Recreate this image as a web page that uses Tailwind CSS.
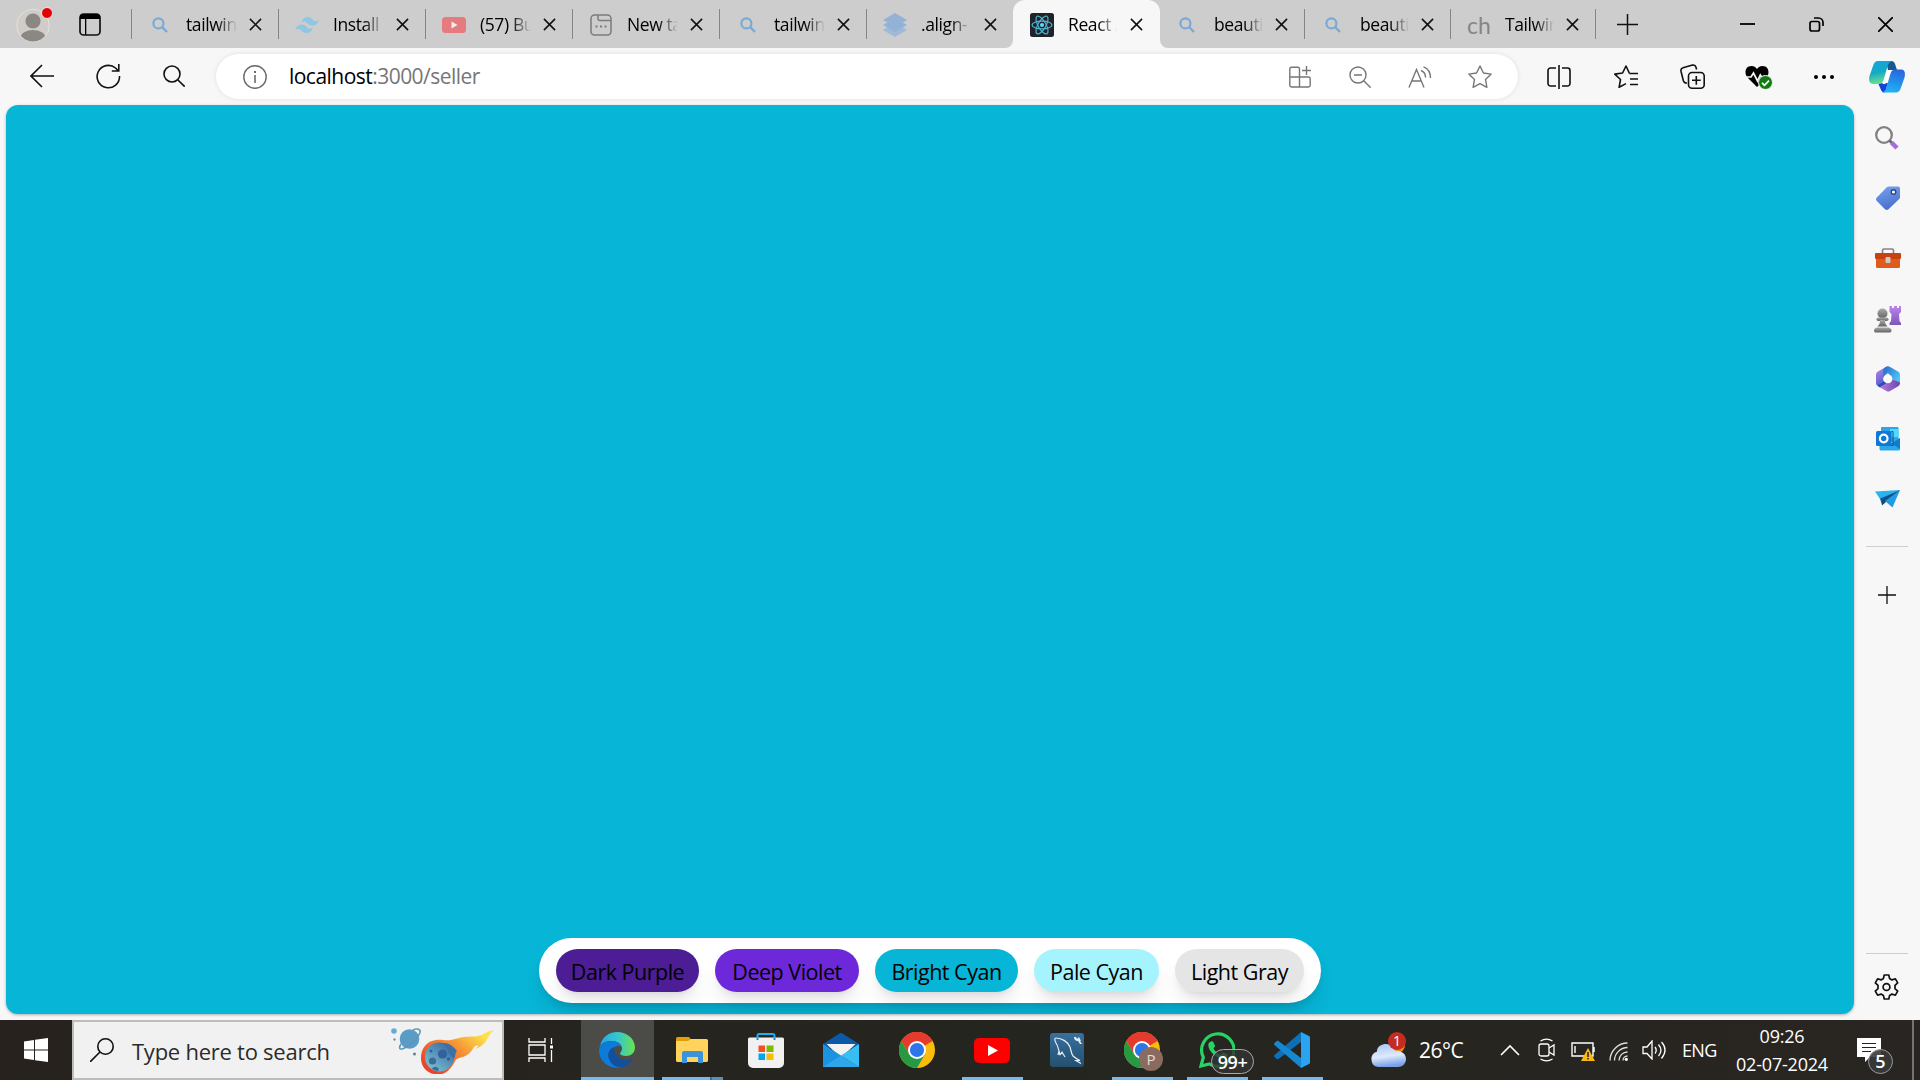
<!DOCTYPE html>
<html lang="en">
<head>
<meta charset="utf-8">
<title>React App</title>
<script src="https://cdn.jsdelivr.net/npm/@tailwindcss/browser@4"></script>
</head>
<body class="w-[1920px] h-[1080px] overflow-hidden flex flex-col bg-[#f7f7f7] text-black font-['Open_Sans','Noto_Sans',sans-serif] whitespace-nowrap">

<svg class="hidden">
  <symbol id="x" viewBox="0 0 14 14"><path d="M1 1l12 12M13 1L1 13" stroke="#111" stroke-width="1.7" fill="none"/></symbol>
  <symbol id="mag" viewBox="0 0 16 16"><circle cx="6.4" cy="6.4" r="5" fill="none" stroke="#7ba9d6" stroke-width="2.2"/><path d="M10.2 10.2l4.8 4.8" stroke="#7ba9d6" stroke-width="2.4"/></symbol>
  <symbol id="chrome" viewBox="0 0 36 36">
    <circle cx="18" cy="18" r="18" fill="#fbbc0c"/>
    <path d="M18 18L2.4 9A18 18 0 0 1 33.6 9z" fill="#e33b2e"/>
    <path d="M18 9H33.6A18 18 0 0 0 2.4 9L10 22z" fill="#e33b2e"/>
    <path d="M2.4 9A18 18 0 0 0 18 36L25.8 22.5 18 26 10.2 22.5z" fill="#259a43"/>
    <circle cx="18" cy="18" r="9" fill="#fff"/><circle cx="18" cy="18" r="7.1" fill="#2b76ea"/>
  </symbol>
</svg>

<!-- Tab strip -->
<header class="relative h-12 shrink-0 bg-[#cdcdcd] flex items-center text-[17.500px] tracking-[-0.4px] leading-6">
  <div class="w-[131px] flex items-center pl-4">
    <svg class="w-9 h-[42px] -mt-1" viewBox="0 0 36 42"><defs><clipPath id="av"><circle cx="17" cy="24.500" r="16"/></clipPath></defs><circle cx="17" cy="24.500" r="16.300" fill="#d0cdc9" stroke="#e4e2de"/><g clip-path="url(#av)" fill="#8b8783"><circle cx="17" cy="20" r="7.600"/><ellipse cx="17" cy="37" rx="12.500" ry="8"/></g><circle cx="31" cy="12" r="5.500" fill="#e30000" stroke="#eee"/></svg>
    <svg class="w-[22px] h-[23px] ml-[27px]" viewBox="0 0 22 23"><rect x="1" y="1" width="20" height="21" rx="3.500" fill="none" stroke="#111" stroke-width="1.700"/><path d="M1 6V4a3 3 0 0 1 3-3h14a3 3 0 0 1 3 3v2zM6 6h1.300v16H6z" fill="#000"/></svg>
  </div>

  <div class="w-[147px] h-[30px] border-l border-[#858585] flex items-center pl-5">
    <svg class="w-4 h-4 mt-0.5"><use href="#mag"/></svg>
    <span class="ml-[18px] w-[52px] overflow-hidden mask-r-from-60% mask-r-to-98%">tailwind</span>
    <svg class="w-[13px] h-[13px] ml-[11px] mt-px"><use href="#x"/></svg>
  </div>
  <div class="w-[147px] h-[30px] border-l border-[#858585] flex items-center pl-4">
    <svg class="w-6 h-5 mt-0.5" viewBox="0 0 24 20"><path d="M6 8c1-4 3.300-6 6.500-6 4.800 0 5 3.700 7.500 4 1.500.4 2.800 0 4-1.500-1 4-3.300 6-6.500 6-4.800 0-5-3.500-7.500-4-1.500-.4-2.800.1-4 1.500zM0 15.500c1-4 3.300-6 6.500-6 4.800 0 5 3.700 7.500 4 1.500.4 2.800 0 4-1.500-1 4-3.300 6-6.500 6-4.800 0-5-3.500-7.500-4-1.500-.4-2.800.1-4 1.500z" fill="#8cc7e3"/></svg>
    <span class="ml-[14px] w-[52px] overflow-hidden mask-r-from-60% mask-r-to-98%">Install T</span>
    <svg class="w-[13px] h-[13px] ml-[11px] mt-px"><use href="#x"/></svg>
  </div>
  <div class="w-[147px] h-[30px] border-l border-[#858585] flex items-center pl-4">
    <svg class="w-6 h-4 mt-0.5" viewBox="0 0 24 16"><rect width="24" height="16" rx="3.500" fill="#e57b7e"/><path d="M9.500 4.500v7l6-3.500z" fill="#f5eeee"/></svg>
    <span class="ml-[14px] w-[52px] overflow-hidden mask-r-from-60% mask-r-to-98%">(57) Build</span>
    <svg class="w-[13px] h-[13px] ml-[11px] mt-px"><use href="#x"/></svg>
  </div>
  <div class="w-[147px] h-[30px] border-l border-[#858585] flex items-center pl-[17px]">
    <svg class="w-[22px] h-[22px] mt-0.5" viewBox="0 0 22 22" fill="none" stroke="#7b7b7b" stroke-width="1.500"><rect x="1" y="1" width="20" height="20" rx="3.500"/><path d="M8 1v3.500a2 2 0 0 0 2 2h11"/><path d="M5.500 12.500h2M10 12.500h2M14.500 12.500h2" stroke-width="2"/></svg>
    <span class="ml-[15px] w-[52px] overflow-hidden mask-r-from-60% mask-r-to-98%">New tab</span>
    <svg class="w-[13px] h-[13px] ml-[11px] mt-px"><use href="#x"/></svg>
  </div>
  <div class="w-[147px] h-[30px] border-l border-[#858585] flex items-center pl-5">
    <svg class="w-4 h-4 mt-0.5"><use href="#mag"/></svg>
    <span class="ml-[18px] w-[52px] overflow-hidden mask-r-from-60% mask-r-to-98%">tailwind</span>
    <svg class="w-[13px] h-[13px] ml-[11px] mt-px"><use href="#x"/></svg>
  </div>
  <div class="w-[147px] h-[30px] border-l border-[#858585] flex items-center pl-4">
    <svg class="w-6 h-6 mt-0.5" viewBox="0 0 24 24"><path d="M12 10l12 7-12 7-12-7z" fill="#a0b9d7"/><path d="M12 5l12 7-12 7-12-7z" fill="#91b3d9"/><path d="M12 0l12 7-12 7L0 7z" fill="#94b2d3"/></svg>
    <span class="ml-[14px] w-[50px] overflow-hidden mask-r-from-60% mask-r-to-98%">.align-</span>
    <svg class="w-[13px] h-[13px] ml-[13px] mt-px"><use href="#x"/></svg>
  </div>
  <div class="relative w-[147px] h-12 bg-[#f7f7f7] rounded-t-xl flex items-center pl-[17px]">
    <svg class="absolute -left-2 bottom-0 w-2 h-2" viewBox="0 0 8 8"><path d="M8 0v8H0a8 8 0 0 0 8-8z" fill="#f7f7f7"/></svg>
    <svg class="absolute -right-2 bottom-0 w-2 h-2" viewBox="0 0 8 8"><path d="M0 0v8h8a8 8 0 0 1-8-8z" fill="#f7f7f7"/></svg>
    <svg class="w-6 h-6 mt-px" viewBox="0 0 24 24"><rect width="24" height="24" rx="2.500" fill="#20232a"/><g fill="none" stroke="#4fb4d0" stroke-width="1.200"><ellipse cx="12" cy="12" rx="10" ry="3.900"/><ellipse cx="12" cy="12" rx="10" ry="3.900" transform="rotate(60 12 12)"/><ellipse cx="12" cy="12" rx="10" ry="3.900" transform="rotate(120 12 12)"/></g><circle cx="12" cy="12" r="2" fill="#61dafb"/></svg>
    <span class="ml-[14px] w-[50px] overflow-hidden mask-r-from-60% mask-r-to-98%">React App</span>
    <svg class="w-[13px] h-[13px] ml-[12px] mt-px"><use href="#x"/></svg>
  </div>
  <div class="w-[144px] h-[30px] flex items-center pl-[19px]">
    <svg class="w-4 h-4 mt-0.5"><use href="#mag"/></svg>
    <span class="ml-[19px] w-[50px] overflow-hidden mask-r-from-60% mask-r-to-98%">beautiful</span>
    <svg class="w-[13px] h-[13px] ml-[11px] mt-px"><use href="#x"/></svg>
  </div>
  <div class="w-[146px] h-[30px] border-l border-[#858585] flex items-center pl-5">
    <svg class="w-4 h-4 mt-0.5"><use href="#mag"/></svg>
    <span class="ml-[19px] w-[50px] overflow-hidden mask-r-from-60% mask-r-to-98%">beautiful</span>
    <svg class="w-[13px] h-[13px] ml-[11px] mt-px"><use href="#x"/></svg>
  </div>
  <div class="w-[146px] h-[30px] border-x border-[#858585] flex items-center pl-4">
    <span class="w-[22px] mt-0.5 font-[Lato] text-[23px] tracking-normal text-[#858585]">ch</span>
    <span class="ml-4 w-[50px] overflow-hidden mask-r-from-60% mask-r-to-98%">Tailwind</span>
    <svg class="w-[13px] h-[13px] ml-[11px] mt-px"><use href="#x"/></svg>
  </div>
  <svg class="w-[21px] h-[21px] ml-[21px]" viewBox="0 0 21 21"><path d="M10.500 0v21M0 10.500h21" stroke="#111" stroke-width="1.500"/></svg>
  <svg class="w-[15px] h-[3px] ml-auto" viewBox="0 0 15 3"><path d="M0 1h15" stroke="#000" stroke-width="1.800"/></svg>
  <svg class="w-[15px] h-[15px] ml-[54px]" viewBox="0 0 15 15" fill="none" stroke="#000" stroke-width="1.700"><rect x="1" y="4.500" width="9.500" height="9.500" rx="2"/><path d="M5 1h4.500a4.500 4.500 0 0 1 4.500 4.500V9"/></svg>
  <svg class="w-[15px] h-[15px] ml-[54px] mr-[27px]" viewBox="0 0 14 14"><path d="M0 0l14 14M14 0L0 14" stroke="#000" stroke-width="1.600"/></svg>
</header>

<!-- Toolbar -->
<nav class="h-[57px] shrink-0 flex items-center pl-[9px]">
  <div class="w-[66px] flex justify-center"><svg class="w-6 h-6 -mt-px" viewBox="0 0 24 24" fill="none" stroke="#111" stroke-width="1.600"><path d="M24 12H1M12 1L1 12l11 11"/></svg></div>
  <div class="w-[66px] flex justify-center"><svg class="w-[25px] h-[26px] -mt-px" viewBox="0 0 25 26" fill="none" stroke="#111" stroke-width="1.600"><path d="M23.500 13A11.200 11.200 0 1 1 19.500 5l3 2.800M22.800 1v7h-7"/></svg></div>
  <div class="w-[66px] flex justify-center"><svg class="w-[22px] h-[22px] -mt-px" viewBox="0 0 22 22" fill="none" stroke="#111" stroke-width="1.600"><circle cx="9" cy="9" r="8"/><path d="M14.700 14.700l7 7"/></svg></div>

  <div class="w-[1302px] h-[45px] ml-[9px] rounded-full bg-white flex items-center pl-[27px] pr-[8px] shadow-[0_0_5px_rgba(0,0,0,0.10)]">
    <svg class="w-6 h-6" viewBox="0 0 24 24" fill="none" stroke="#6b6b6b" stroke-width="1.400"><circle cx="12" cy="12" r="11.200"/><path d="M12 10v8" stroke-width="1.600"/><path d="M12 6v2" stroke-width="2"/></svg>
    <span class="ml-[22px] grow text-[21px] tracking-[-0.530px] text-[#767676]"><span class="text-black">localhost</span>:3000/seller</span>
    <div class="w-[60px] flex justify-center"><svg class="w-[22px] h-[22px]" viewBox="0 0 22 22" fill="none" stroke="#767676" stroke-width="1.400"><path d="M10.500 11V3a1.700 1.700 0 0 0-1.700-1.700H2.500A1.700 1.700 0 0 0 .8 3v8zM.8 11v8.300A1.700 1.700 0 0 0 2.500 21h8V11zM10.500 11h9a1.700 1.700 0 0 1 1.700 1.700v6.600A1.700 1.700 0 0 1 19.500 21h-9M17.500 0v9M13 4.500h9"/></svg></div>
    <div class="w-[60px] flex justify-center"><svg class="w-[22px] h-[22px]" viewBox="0 0 22 22" fill="none" stroke="#767676" stroke-width="1.400"><circle cx="9" cy="9" r="8"/><path d="M14.700 14.700l7 7M5 9h8"/></svg></div>
    <div class="w-[60px] flex justify-center"><svg class="w-6 h-[22px]" viewBox="0 0 24 22" fill="none" stroke="#767676" stroke-width="1.400"><path d="M1 21.500L8.500 3.500 16 21.500M3.700 15h9.600M13 4.500c2.800 1 4.500 3.700 4.500 7M15.500 .8c4 1.400 7 5.500 7 11.200"/></svg></div>
    <div class="w-[60px] flex justify-center"><svg class="w-6 h-6" viewBox="0 0 24 24" fill="none" stroke="#767676" stroke-width="1.400" stroke-linejoin="round"><path d="M12 1l3.400 7 7.800 1.100-5.700 5.400 1.400 7.800L12 18.600l-6.900 3.700 1.400-7.800L.8 9.100 8.600 8z"/></svg></div>
  </div>

  <div class="w-[66px] ml-[8px] mr-px flex justify-center"><svg class="w-6 h-6" viewBox="0 0 24 24" fill="none" stroke="#111" stroke-width="1.600"><path d="M9 3H3.500A2.500 2.500 0 0 0 1 5.500v13A2.500 2.500 0 0 0 3.500 21H9M15 3h5.500A2.500 2.500 0 0 1 23 5.500v13a2.500 2.500 0 0 1-2.500 2.500H15M12 0v24"/></svg></div>
  <div class="w-[66px] flex justify-center"><svg class="w-6 h-6" viewBox="0 0 24 24" fill="none" stroke="#111" stroke-width="1.600" stroke-linejoin="round"><path d="M15.500 8.500L12 1 8.600 8 .8 9.100l5.700 5.400-1.400 7.800L12 18.600M15.500 8.500H24M16 14h8M16 19.500h8"/></svg></div>
  <div class="w-[66px] flex justify-center"><svg class="w-[25px] h-[25px]" viewBox="0 0 25 25" fill="none" stroke="#111" stroke-width="1.600"><path d="M7 19c-2 .3-3.200-.8-3.700-2.500L1 7.200C.6 5.300 1.500 4.200 3 3.700L12.500 1.100c2-.5 3 .4 3.500 2.200l.6 2.200"/><rect x="8.500" y="8.500" width="15.700" height="15.700" rx="3.500"/><path d="M16.300 12v8.700M12 16.300h8.700"/></svg></div>
  <div class="w-[66px] flex justify-center"><svg class="w-7 h-6 ml-0.5" viewBox="0 0 28 24"><path d="M12 22L2.500 12.500C-1 8.500 0 1 6.500 1 9.500 1 11 2.500 12 4c1-1.500 2.500-3 5.500-3C24 1 25 8.500 21.500 12.500z" fill="#000"/><path d="M0 12h6l2.500-4 4 8 2.800-6 1.700 2.500H24" fill="none" stroke="#f7f7f7" stroke-width="1.700"/><circle cx="20.500" cy="17.500" r="7" fill="#107c10" stroke="#f7f7f7"/><path d="M17 17.800l2.500 2.500 4.500-4.600" fill="none" stroke="#fff" stroke-width="1.700"/></svg></div>
  <div class="w-[66px] flex justify-center"><svg class="w-5 h-1" viewBox="0 0 20 4"><circle cx="2" cy="2" r="2"/><circle cx="10" cy="2" r="2"/><circle cx="18" cy="2" r="2"/></svg></div>
  <div class="w-[60px] flex justify-center"><svg class="w-9 h-8" viewBox="0 0 36 32"><defs><linearGradient id="cp1" x2=".2" y2="1"><stop stop-color="#12a5dd"/><stop offset=".55" stop-color="#15a9c6"/><stop offset="1" stop-color="#6adf8c"/></linearGradient><linearGradient id="cp2" x1=".6" x2=".3" y2="1"><stop stop-color="#2a66e0"/><stop offset="1" stop-color="#1cb8f8"/></linearGradient></defs><path d="M17 0h5c3 0 4 2 5 6l1 3h-9z" fill="#14598f"/><path d="M9 22h10l-3 9.500c-3 0-4-2-5-5z" fill="#1443d8"/><path d="M9 0h14c-3 1-4 3-5 7l-3.500 12c-1 3-2 4-5 4H4c-4 0-4.500-4-3.500-8L4 5c1-3.500 2.500-5 5-5z" fill="url(#cp1)"/><path d="M27 31.500H13c3-1 4-3 5-7l3.500-12c1-3 2-4 5-4H32c4 0 4.500 4 3.500 8L32 26.500c-1 3.500-2.500 5-5 5z" fill="url(#cp2)"/><path d="M19.500 9h3.500c-2 2-3 8-5 12-.5 1-1.500 2-3 2h-2c2-1 3-7 4-10 .5-2 1-3.500 2.500-4z" fill="#fff"/></svg></div>
</nav>

<!-- Page and side bar -->
<div class="h-[915px] shrink-0 flex">
  <main class="ml-1.5 w-[1848px] h-[909px] rounded-xl bg-[#07b5d7] shadow-[0_1px_3px_rgba(0,0,0,0.3)] overflow-hidden flex items-end justify-center pb-[11px]">
    <div class="h-[65px] rounded-full bg-white px-[17px] flex items-center gap-4 text-[21.500px] tracking-[-0.500px] shadow-[0_13px_20px_-4px_rgba(0,0,0,0.12),0_5px_8px_-4px_rgba(0,0,0,0.1)]">
      <button class="w-[143px] h-[43px] pt-[3px] rounded-full bg-[#4c1d95] shadow-[0_13px_20px_-4px_rgba(0,0,0,0.1),0_5px_8px_-4px_rgba(0,0,0,0.1)]">Dark Purple</button>
      <button class="w-[144px] h-[43px] pt-[3px] rounded-full bg-[#6d28d9] shadow-[0_13px_20px_-4px_rgba(0,0,0,0.1),0_5px_8px_-4px_rgba(0,0,0,0.1)]">Deep Violet</button>
      <button class="w-[143px] h-[43px] pt-[3px] rounded-full bg-[#07b5d7] shadow-[0_13px_20px_-4px_rgba(0,0,0,0.1),0_5px_8px_-4px_rgba(0,0,0,0.1)]">Bright Cyan</button>
      <button class="w-[125px] h-[43px] pt-[3px] rounded-full bg-[#a5f3fc] shadow-[0_13px_20px_-4px_rgba(0,0,0,0.1),0_5px_8px_-4px_rgba(0,0,0,0.1)]">Pale Cyan</button>
      <button class="w-[129px] h-[43px] pt-[3px] rounded-full bg-[#e5e5e5] shadow-[0_13px_20px_-4px_rgba(0,0,0,0.1),0_5px_8px_-4px_rgba(0,0,0,0.1)]">Light Gray</button>
    </div>
  </main>
  <aside class="w-[66px] flex flex-col items-center pt-[3px]">
    <div class="h-[60.200px] flex items-center"><svg class="w-6 h-6" viewBox="0 0 24 24"><circle cx="9" cy="9" r="7.800" fill="none" stroke="#808080" stroke-width="2.300"/><path d="M14.500 14.500l3 3" stroke="#666" stroke-width="2.600"/><path d="M16.500 16.500l5.500 5.500" stroke="#a66bd8" stroke-width="4.500"/></svg></div>
    <div class="h-[60.200px] flex items-center"><svg class="w-6 h-6 ml-0.5" viewBox="0 0 24 24"><defs><linearGradient id="tg" y2="1" x2=".3"><stop stop-color="#78a5ef"/><stop offset="1" stop-color="#4a70cf"/></linearGradient></defs><path d="M12.500.5H22a2 2 0 0 1 2 2v8.700c0 .7-.2 1.200-.8 1.800L12.500 23.200c-1 1-2.500 1-3.500 0L.8 15c-1-1-1-2.500 0-3.500L11 1.100c.5-.4.900-.6 1.500-.6z" fill="url(#tg)"/><circle cx="17.500" cy="6" r="2.300" fill="#fff" stroke="#2b448c" stroke-width="1.400"/></svg></div>
    <div class="h-[60.200px] flex items-center"><svg class="w-[26px] h-5 ml-0.5" viewBox="0 0 26 20"><path d="M7.500 6V2.500A1.500 1.500 0 0 1 9 1h8a1.500 1.500 0 0 1 1.500 1.500V6" fill="none" stroke="#858585" stroke-width="1.700"/><rect x="1" y="6" width="24" height="14" rx="1.500" fill="#e05a1e"/><rect y="5" width="26" height="6" rx="1" fill="#c8420f"/><rect x="10.500" y="9" width="5" height="6" rx="1" fill="#c9c9c9"/></svg></div>
    <div class="h-[60.200px] flex items-center"><svg class="w-[27px] h-7" viewBox="0 0 27 28"><defs><linearGradient id="rk" y2="1" x2="0"><stop stop-color="#bd84ea"/><stop offset="1" stop-color="#7e57b8"/></linearGradient><linearGradient id="pw" y2="1" x2="0"><stop stop-color="#aaa"/><stop offset="1" stop-color="#636363"/></linearGradient></defs><path d="M15.500 1h2.500v2h2V1h3v2h2V1h2v6l-2 2 .5 7 1.500 2v2H15.500v-2l1.500-2 .5-7-2-2z" fill="url(#rk)"/><g fill="url(#pw)"><circle cx="8.500" cy="8.500" r="5"/><rect x="2.500" y="12.500" width="12" height="3.500" rx="1.700"/><path d="M6 15h5c0 3 .5 4.500 2.500 6.500h-10C5.500 19.500 6 18 6 15z"/><path d="M3 22.500h11.500c2 .5 3 1.500 3 3s-.8 2-2 2H2c-1.200 0-2-.5-2-2s1-2.500 3-3z"/></g></svg></div>
    <div class="h-[60.200px] flex items-center"><svg class="w-6 h-[26px] ml-0.5" viewBox="0 0 24 26"><defs><clipPath id="hx"><path d="M10.300.8a3.500 3.500 0 0 1 3.400 0L22 5.500a3.500 3.500 0 0 1 2 3v8.800a3.500 3.500 0 0 1-1.800 3L14 25a3.500 3.500 0 0 1-3.500 0L2 20.300a3.500 3.500 0 0 1-2-3V8.600a3.500 3.500 0 0 1 1.900-3z"/></clipPath><linearGradient id="h1" y2="1" x2=".3"><stop stop-color="#c48be6"/><stop offset="1" stop-color="#4458d0"/></linearGradient><linearGradient id="h2" x2="1" y2=".6"><stop stop-color="#2467c9"/><stop offset="1" stop-color="#4cc4f5"/></linearGradient><linearGradient id="h3" x2="1"><stop stop-color="#c07ce0"/><stop offset="1" stop-color="#6a45ac"/></linearGradient></defs><g clip-path="url(#hx)"><path d="M0 0h12L7 13l2 5-6 5-3-2z" fill="url(#h1)"/><path d="M9 0h15v17l-8-4-4-6-5 4c0-5 0-8 2-11z" fill="url(#h2)"/><path d="M3 21l8-4 5-4 8 3.500V26H3z" fill="url(#h3)"/><path d="M3 21.500l8-4.500-3-1.500L2 19z" fill="#2b4fae"/></g><circle cx="12" cy="12.800" r="4.400" fill="#fafafa"/></svg></div>
    <div class="h-[60.200px] flex items-center"><svg class="w-6 h-6 ml-0.5" viewBox="0 0 24 24"><rect x="5" y="0" width="17.500" height="15" rx="1" fill="#28a8ea"/><path d="M14 2h8.500v8H14z" fill="#50d9ff"/><path d="M3.500 12L16 16l8-5v11a1.500 1.500 0 0 1-1.500 1.500H5A1.500 1.500 0 0 1 3.500 22z" fill="#28a8ea"/><path d="M24 11l-8.500 5.500L24 22z" fill="#137ccc"/><path d="M15.500 4.500H17v14H4" fill="none" stroke="#0b4f86" stroke-width="1"/><rect y="4" width="15.500" height="15" rx="1.500" fill="#0f78d4"/><circle cx="7.700" cy="11.500" r="3.800" fill="none" stroke="#fff" stroke-width="2.200"/></svg></div>
    <div class="h-[60.200px] flex items-center"><svg class="w-[25px] h-[18px]" viewBox="0 0 25 18"><path d="M0 1.500L25 0 5 9z" fill="#27b5ee"/><path d="M25 0L5 8.500 7 15z" fill="#0d5a9e"/><path d="M7 15.500V10L25 0l-9.500 13-4-1.500z" fill="#134b82"/><path d="M25 0l-7.500 17.500L10 11z" fill="#219be4"/></svg></div>
    <div class="w-[42px] h-px bg-[#cfcfcf] mt-[17px]"></div>
    <svg class="w-[18px] h-[18px] mt-[39px] mr-px" viewBox="0 0 18 18"><path d="M9 0v18M0 9h18" stroke="#111" stroke-width="1.300"/></svg>
    <div class="w-[42px] h-px bg-[#cfcfcf] mt-auto"></div>
    <svg class="w-[25px] h-[26px] mt-5 mb-5 mr-px" viewBox="0 0 25 26" fill="none" stroke="#111" stroke-width="1.700" stroke-linejoin="round"><path d="M10.200 1h4.600l.8 3.600 2.300 1.300 3.500-1.100 2.300 4-2.700 2.500v3.400l2.700 2.500-2.300 4-3.500-1.100-2.300 1.300-.8 3.600h-4.600l-.8-3.600-2.300-1.300-3.500 1.100-2.300-4L4 14.700v-3.400L1.300 8.800l2.300-4 3.500 1.100 2.300-1.300z"/><circle cx="12.500" cy="13" r="3.400"/></svg>
  </aside>
</div>

<!-- Taskbar -->
<footer class="h-[60px] shrink-0 flex bg-linear-to-r from-[#27221d] via-[#25251f] to-[#292522] text-white">
  <div class="w-[72px] flex items-center justify-center"><svg class="w-6 h-6" viewBox="0 0 24 24"><path d="M0 3.400L10 2v9.500H0zM11 1.800L24 0v11.500H11zM0 12.500h10V22L0 20.600zM11 12.500h13V24l-13-1.800z" fill="#fff"/></svg></div>
  <div class="w-[432px] border-2 border-[#bcbcbc] bg-[#f1f1f1] flex items-center pl-4">
    <svg class="w-6 h-6" viewBox="0 0 24 24" fill="none" stroke="#111" stroke-width="1.600"><circle cx="15.500" cy="8.500" r="7.700"/><path d="M10 14L0 24"/></svg>
    <span class="ml-[18px] w-[200px] text-[22px] tracking-[-0.250px] text-[#2b2b2b] mt-0.5">Type here to search</span>
    <svg class="w-[106px] h-12 ml-[59px]" viewBox="0 0 106 48"><defs><linearGradient id="fl" x1="0" x2="1" y1=".7" y2="0"><stop stop-color="#e8442c"/><stop offset=".45" stop-color="#f58b33"/><stop offset=".85" stop-color="#fde24a"/></linearGradient><linearGradient id="as" x1="0" y1="1" x2=".8" y2="0"><stop stop-color="#7fd0d4"/><stop offset="1" stop-color="#3a66a5"/></linearGradient></defs>
      <circle cx="3" cy="5" r="2.800" fill="#66abd6"/><circle cx="3.500" cy="13.500" r="1.200" fill="#5b98bf"/><circle cx="23.500" cy="28" r="1.500" fill="#5783a0"/>
      <circle cx="18.500" cy="13" r="9.800" fill="#5b9cc7"/><path d="M22 4c4-2 8-1 7 2.500C27 12 18 21 11 23c-3 .5-3-2-1-5" fill="none" stroke="#5d98ba" stroke-width="1.600"/>
      <path d="M30 32c0-10 6-17 15-18 6-.7 10 1 15 0 8-2 14-4 22-3.500C91 11 96 4 103 4.500c-5 3-6 9-10 13-3 3-7 5-8 5 3-2 3-3 1-3-3 0-4 4-6 6-5 6-10 5-15 8-4 8-9 15-18 15-9 0-17-6-17-16.500z" fill="url(#fl)"/>
      <circle cx="48.500" cy="31" r="14.500" fill="url(#as)"/><path d="M53 17c5 0 9 3 13 8-2 1-1 5-3 8l-4-4z" fill="#3f6fa7"/><circle cx="51.500" cy="28" r="4.600" fill="#33619a"/><circle cx="41.500" cy="35" r="3.600" fill="#3e6c9a"/><path d="M41 43c1-3 5-3 7 0l-1 2c-2 0-4-1-6-2z" fill="#3e6c9a"/><circle cx="57.500" cy="33" r="1.700" fill="#33619a"/><circle cx="40" cy="25" r="1.500" fill="#33619a"/></svg>
  </div>
  <div class="w-[75px] pr-0.5 flex items-center justify-center"><svg class="w-[26px] h-6" viewBox="0 0 26 24" fill="none" stroke="#fff" stroke-width="1.300"><path d="M1 0v4h16V0M1 24v-4h16v4M1 7h16v10H1zM23.500 0v6M23.500 12v12"/><path d="M22 7.500h3v3h-3z" fill="#fff" stroke="none"/></svg></div>
  <div class="w-[75px] flex justify-center"><div class="w-[73px] bg-[#4b4b48] border-b-3 border-[#76b9ed] ml-0.5 pr-px flex items-center justify-center pt-[3px]"><svg class="w-9 h-9" viewBox="0 0 36 36"><defs><linearGradient id="e1" x2="1"><stop stop-color="#28a7df"/><stop offset=".5" stop-color="#35c6cf"/><stop offset="1" stop-color="#6be34c"/></linearGradient></defs><path d="M1 14C3 5 10 0 18 0c10 0 18 7 18 15.500 0 5-4 8.500-9 8.500-3.500 0-6-1-6-2.500 0-1 2-2 2-5C23 12 18 9 13 9 7 9 3 11 1 14z" fill="url(#e1)"/><path d="M0 18C0 12 6 9 12 9c6 0 11 3 11 7-1-2-3-2.500-5-2-4 1-5 5-4.500 9 .7 6 5 10 9.500 12.300C11 38 0 30 0 18z" fill="#0d7bd8"/><path d="M15 15c-5 2-7 7-5 12 2 6 8 9 13 8.300 5-1 9-4.500 10.800-8.300-7 3.500-19 1-18.800-12z" fill="#10509f"/></svg></div></div>
  <div class="relative w-[75px] flex items-center justify-center"><svg class="w-8 h-[26px]" viewBox="0 0 32 26"><path d="M0 1.500A1.500 1.500 0 0 1 1.500 0H13l2.500 3v3H0z" fill="#e29e06"/><path d="M0 4h12l3-2h15.500A1.500 1.500 0 0 1 32 3.500v20a1.500 1.500 0 0 1-1.500 1.500h-29A1.500 1.500 0 0 1 0 23.500z" fill="#ffd35c"/><path d="M6 26V16a2 2 0 0 1 2-2h17a2 2 0 0 1 2 2v10h-5v-6H11v6z" fill="#3b93dc"/></svg><div class="absolute left-2 bottom-0 w-[61px] h-[3px] bg-[#76b9ed] flex justify-end"><div class="w-[13.500px] h-full bg-[#5c8fb8] border-l-2 border-[#436a8a]"></div></div></div>
  <div class="w-[75px] pr-px flex items-center justify-center"><svg class="w-9 h-[35px]" viewBox="0 0 36 35"><path d="M9.500 7V2.500A1.500 1.500 0 0 1 11 1h14a1.500 1.500 0 0 1 1.500 1.500V7" fill="none" stroke="#1cb0ee" stroke-width="2"/><path d="M0 6a1.500 1.500 0 0 1 1.500-1.500h33A1.500 1.500 0 0 1 36 6v24a5 5 0 0 1-5 5H5a5 5 0 0 1-5-5z" fill="#f1f1f1"/><path d="M9.500 7V4.500M26.500 7V4.500" stroke="#1589c2" stroke-width="2"/><path d="M10.500 12.500H17V19h-6.500z" fill="#f25022"/><path d="M18.500 12.500H25.500V19h-7z" fill="#7fba00"/><path d="M10.500 20.500H17V27h-6.500z" fill="#00a4ef"/><path d="M18.500 20.500H25.500V27h-7z" fill="#ffb900"/></svg></div>
  <div class="w-[75px] pr-px flex items-center justify-center"><svg class="w-9 h-[34px]" viewBox="0 0 36 34"><path d="M0 11L16.500.5c1-.6 2-.6 3 0L36 11v4H0z" fill="#0a5aa8"/><path d="M3.500 11h29L18 25z" fill="#f3f3f3"/><path d="M0 11l18 11.500L36 34H0z" fill="#1b93e0"/><path d="M36 11v23L18 22.500z" fill="#36bff5"/><path d="M0 34l18-11.500L36 34z" fill="#2fa5ea"/></svg></div>
  <div class="w-[75px] flex items-center justify-center"><svg class="w-9 h-9"><use href="#chrome"/></svg></div>
  <div class="relative w-[75px] flex items-center justify-center"><svg class="w-9 h-[25px]" viewBox="0 0 36 25"><rect width="36" height="25" rx="5" fill="#f00"/><path d="M14 7v11l10-5.500z" fill="#fff"/></svg><div class="absolute left-2 bottom-0 w-[61px] h-[3px] bg-[#76b9ed]"></div></div>
  <div class="w-[75px] flex items-center justify-center"><svg class="w-[34px] h-[34px]" viewBox="0 0 34 34"><defs><linearGradient id="my" y2="1" x2="0"><stop stop-color="#37709f"/><stop offset="1" stop-color="#23506f"/></linearGradient></defs><rect width="34" height="34" rx="3" fill="url(#my)"/><path d="M10 22l-1-4c-1-3-1-5-3-8-1-2-2-5 0-5 6 0 12 4 14 9 1 3 1 6 3 9 2 2 4 3 7 4.500h-4l5 3M10 22l2-3 3 5M9 18l-1 4" fill="none" stroke="#e6eef5" stroke-width="1.200"/><path d="M24 4l2 0 1 2 2-2 2 4-1 0 2 3-2 0-2-3c-3 0-4-2-4-4z" fill="#e6eef5"/></svg></div>
  <div class="relative w-[75px] flex items-center justify-center"><svg class="w-9 h-9"><use href="#chrome"/></svg><span class="absolute left-[35px] top-[27px] size-6 rounded-full bg-[#8b6a60] text-[#e6dcd8] text-[15px] leading-6 text-center">P</span><div class="absolute left-2 bottom-0 w-[61px] h-[3px] bg-[#76b9ed]"></div></div>
  <div class="relative w-[75px] flex items-center justify-center"><svg class="w-9 h-9" viewBox="0 0 36 36"><path d="M2 34l2.300-8.700A16.200 16.200 0 1 1 10.500 32z" fill="none" stroke="#25d366" stroke-width="3.200"/><path d="M12 9.500c1-.5 2-.4 2.500.7l1.500 3.500c.3 1-1.500 2.300-1.500 2.800 1.500 3 4 5 7 6.300.8 0 2-2.400 2.800-2.300l4 2c1 1-1 4.500-4 4.500-6 0-15-7.500-15-14 0-1.700 1.200-3 2.700-3.500z" fill="#25d366"/></svg><span class="absolute left-[32px] top-[29px] w-[43px] h-[25px] rounded-full border border-[#aaa] bg-[#333]/80 text-[18px] leading-[24px] font-semibold text-center tracking-tight">99+</span><div class="absolute left-2 bottom-0 w-[61px] h-[3px] bg-[#76b9ed]"></div></div>
  <div class="relative w-[75px] flex items-center justify-center"><svg class="w-9 h-9" viewBox="0 0 36 36"><path d="M27 0v10L4.500 27c-.6.400-1.200.4-1.700 0L.5 25c-.6-.6-.6-1.500 0-2z" fill="#0b70b8"/><path d="M27 36V26L4.500 9c-.6-.4-1.200-.4-1.700 0L.5 11c-.6.600-.6 1.500 0 2z" fill="#1688d0"/><path d="M27 0l8 4c.6.300 1 .8 1 1.500v25c0 .7-.4 1.200-1 1.500l-8 4z" fill="#2aa3f0"/></svg><div class="absolute left-2 bottom-0 w-[61px] h-[3px] bg-[#76b9ed]"></div></div>

  <div class="grow flex items-center pl-[41px]">
    <div class="relative w-9 h-9 shrink-0"><svg class="w-9 h-9" viewBox="0 0 36 36"><defs><linearGradient id="cl" y2="1" x2=".2"><stop stop-color="#a4c4f4"/><stop offset=".6" stop-color="#dfe9fb"/><stop offset="1" stop-color="#7ba2e8"/></linearGradient></defs><circle cx="27" cy="13" r="8" fill="#f08a12"/><path d="M8 35a8 8 0 0 1-1-15.500C7 14 12 12 16 12c5 0 8 3 9 7 6-1 11 3 11 8s-4 8-8 8z" fill="url(#cl)"/></svg><span class="absolute left-[18px] top-0 size-[18px] rounded-full bg-[#c52b20] text-[14px] leading-[18px] text-center">1</span></div>
    <span class="ml-[13px] w-[81px] text-[21px] tracking-[-0.500px] mt-0.5">26°C</span>
    <svg class="w-[20px] h-3 shrink-0" viewBox="0 0 20 12"><path d="M1 11l9-9 9 9" fill="none" stroke="#fff" stroke-width="1.600"/></svg>
    <svg class="w-[18px] h-6 ml-[18px] shrink-0" viewBox="0 0 18 24" fill="none" stroke="#fff" stroke-width="1.300"><rect x="1" y="6" width="10" height="12" rx="2"/><path d="M11 10l5-3v10l-5-3M2.500 3c4-2.500 8-2.500 12 0M2.500 21c4 2.500 8 2.500 12 0"/></svg>
    <svg class="w-6 h-6 ml-[15px] shrink-0" viewBox="0 0 24 24"><path d="M1 5h21v13H1zM23 9v5M4 8v7" fill="none" stroke="#fff" stroke-width="1.400"/><path d="M17 10l7 13H10z" fill="#fcb913"/><path d="M17 14v5M17 20v1.500" stroke="#222" stroke-width="1.500"/></svg>
    <svg class="w-5 h-5 ml-[14px] mt-1 shrink-0" viewBox="0 0 20 20" fill="none" stroke="#ddd" stroke-width="1.300"><path d="M1 18.500C1 9 9 1 18.500 1M5.500 18.500c0-7 6-13 13-13M10 18.500c0-5 4-8.500 8.500-8.500"/><path d="M14 18.500c0-2.500 2-4.500 4.500-4.500"/><circle cx="17.300" cy="17.300" r="1.600" fill="#fff" stroke="none"/></svg>
    <svg class="w-6 h-5 ml-[13px] shrink-0" viewBox="0 0 24 20" fill="none" stroke="#fff" stroke-width="1.300"><path d="M1 7v6.500h4L10 19V1L5 7zM13 7c1.500 2 1.500 4.500 0 6.500M16.500 4.500c3 3.500 3 8 0 11.500M19.500 2c4.500 5 4.500 11 0 16.500"/></svg>
    <span class="ml-[16px] w-[36px] text-[18px] tracking-[-0.700px]">ENG</span>
    <div class="ml-[16px] w-[96px] text-[18px] leading-[28px] tracking-[-0.200px] text-center"><div>09:26</div><div>02-07-2024</div></div>
    <div class="relative ml-[27px] w-6 h-6 shrink-0"><svg class="w-6 h-6" viewBox="0 0 24 24"><path d="M0 0h24v19H13l-5 5v-5H0z" fill="#fff"/><path d="M5 5.500h14M5 9.500h14M5 13.500h9" stroke="#222" stroke-width="1.200"/></svg><span class="absolute left-[11px] top-[11px] size-[25px] rounded-full border border-[#999] bg-[#3a3a3a]/90 text-[18px] leading-[23px] font-semibold text-center">5</span></div>
    <div class="ml-auto mr-1.5 w-0.5 h-full bg-[#77736f]"></div>
  </div>
</footer>
</body>
</html>
